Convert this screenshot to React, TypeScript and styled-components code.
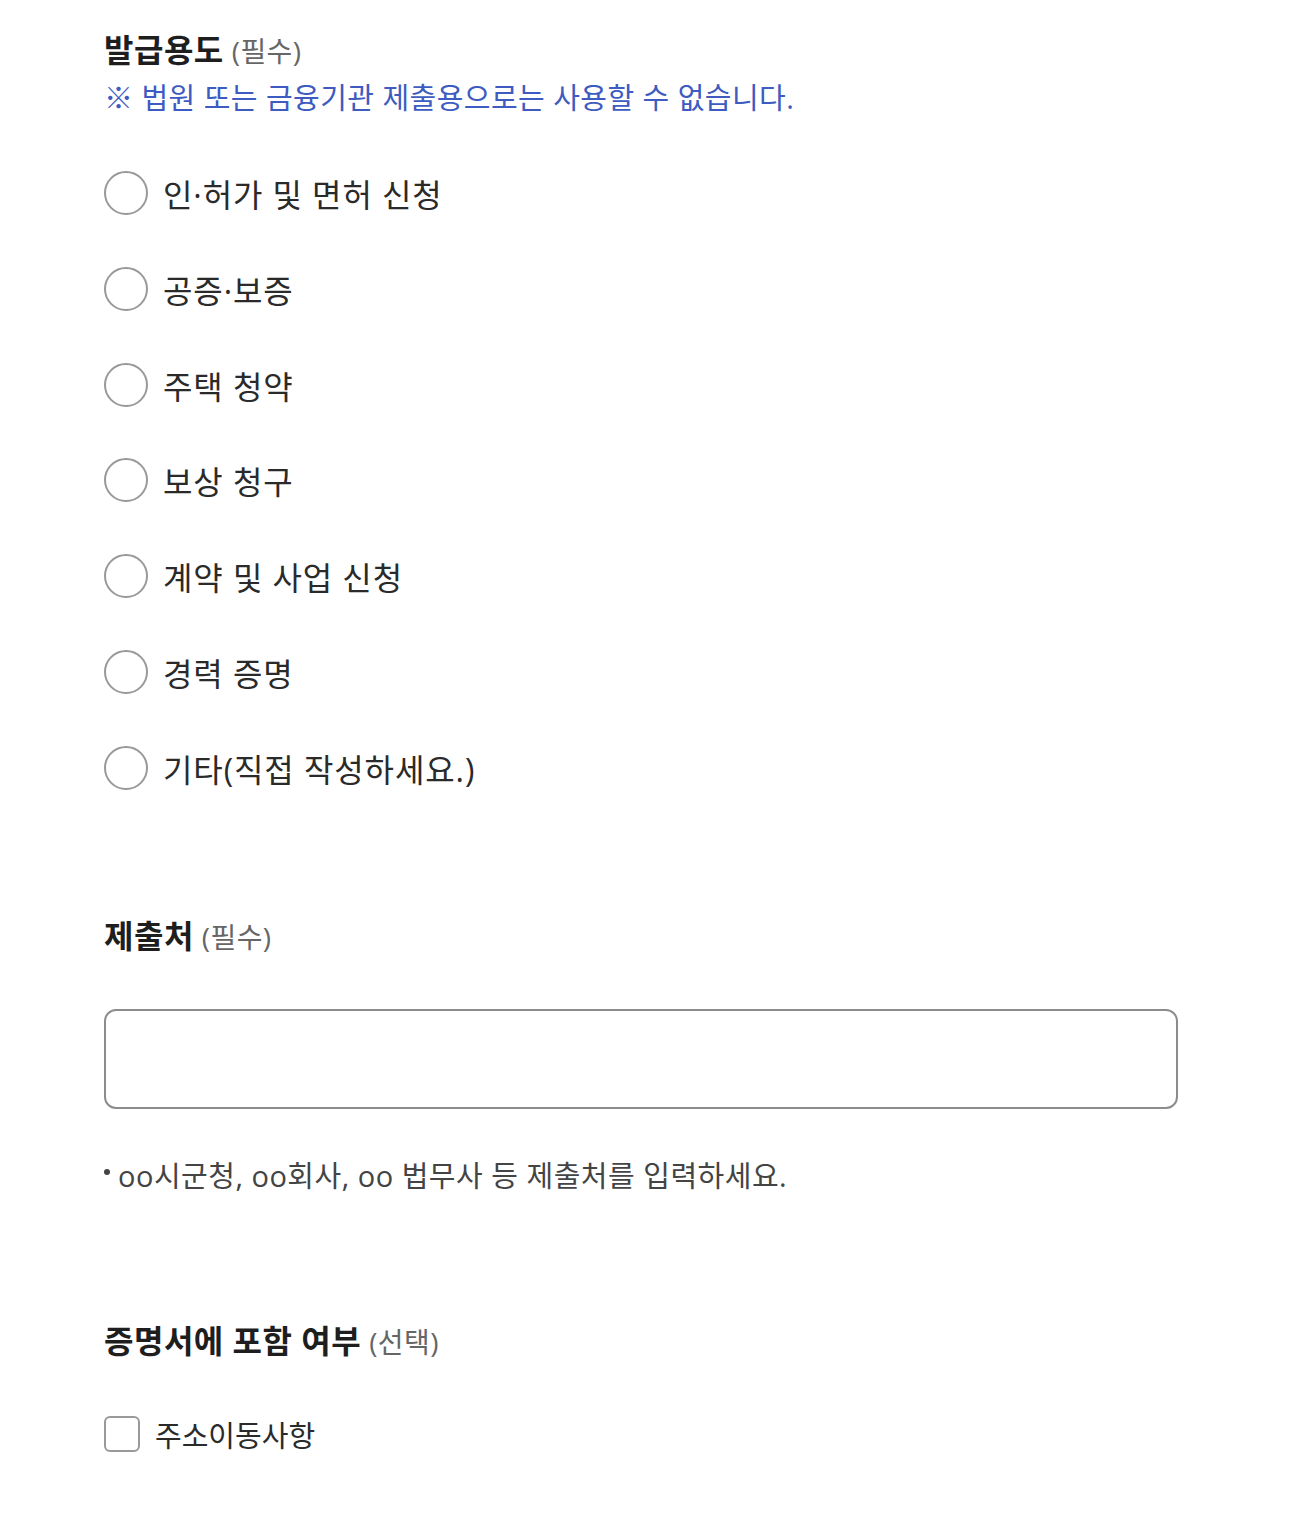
import React from "react";
import styled, { createGlobalStyle } from "styled-components";

const Global = createGlobalStyle`
  html, body { margin: 0; padding: 0; background: #fff; }
  body { font-family: "Open Sans", "Noto Sans CJK KR", sans-serif; color: #222; }
`;

const Page = styled.div`
  padding: 27px 112px 60px 104px;
  display: flex;
  flex-direction: column;
`;

const Section = styled.section<{ $gapTop?: number }>`
  display: flex;
  flex-direction: column;
  margin-top: ${(p) => p.$gapTop ?? 0}px;
`;

const Heading = styled.h2`
  margin: 0;
  font-size: 32px;
  font-weight: 700;
  color: #1e1e1e;
  line-height: 46px;
  letter-spacing: 0.5px;
`;

const Sub = styled.span`
  font-size: 28px;
  font-weight: 400;
  color: #666;
  margin-left: 8px;
  letter-spacing: 0.4px;
`;

const Notice = styled.p`
  margin: 4px 0 0;
  font-size: 29px;
  line-height: 40px;
  color: #3d5bc0;
  letter-spacing: 0.45px;
`;

const RadioList = styled.div`
  display: flex;
  flex-direction: column;
  gap: 51.8px;
  margin-top: 53px;
`;

const Option = styled.label`
  display: flex;
  align-items: center;
  gap: 15px;
  height: 44px;
  cursor: pointer;
`;

const Circle = styled.span`
  width: 44px;
  height: 44px;
  box-sizing: border-box;
  border-radius: 50%;
  border: 2px solid #999;
  flex-shrink: 0;
`;

const OptionText = styled.span`
  font-size: 32px;
  color: #2a2a2a;
  letter-spacing: 0.9px;
`;

const Field = styled.div`
  margin-top: 49px;
  height: 100px;
  box-sizing: border-box;
  border: 2px solid #8c8c8c;
  border-radius: 12px;
`;

const Hint = styled.p`
  margin: 47px 0 0;
  font-size: 29px;
  line-height: 40px;
  color: #444;
  letter-spacing: 0.5px;
  display: flex;
  align-items: center;
`;

const Dot = styled.span`
  width: 6px;
  height: 6px;
  border-radius: 50%;
  background: #444;
  margin-right: 8px;
  transform: translateY(-4px);
`;

const CheckRow = styled.label`
  display: flex;
  align-items: center;
  gap: 15px;
  margin-top: 48px;
  cursor: pointer;
`;

const Box = styled.span`
  width: 36px;
  height: 36px;
  box-sizing: border-box;
  border: 2px solid #999;
  border-radius: 6px;
  flex-shrink: 0;
`;

const CheckText = styled.span`
  font-size: 29px;
  color: #2a2a2a;
  letter-spacing: 0;
`;

const options = [
  "인·허가 및 면허 신청",
  "공증·보증",
  "주택 청약",
  "보상 청구",
  "계약 및 사업 신청",
  "경력 증명",
  "기타(직접 작성하세요.)",
];

export default function App() {
  return (
    <>
      <Global />
      <Page>
        <Section>
          <Heading>
            발급용도<Sub>(필수)</Sub>
          </Heading>
          <Notice>※ 법원 또는 금융기관 제출용으로는 사용할 수 없습니다.</Notice>
          <RadioList>
            {options.map((o) => (
              <Option key={o}>
                <Circle />
                <OptionText>{o}</OptionText>
              </Option>
            ))}
          </RadioList>
        </Section>

        <Section $gapTop={123}>
          <Heading>
            제출처<Sub>(필수)</Sub>
          </Heading>
          <Field />
          <Hint>
            <Dot />
            oo시군청, oo회사, oo 법무사 등 제출처를 입력하세요.
          </Hint>
        </Section>

        <Section $gapTop={122}>
          <Heading>
            증명서에 포함 여부<Sub>(선택)</Sub>
          </Heading>
          <CheckRow>
            <Box />
            <CheckText>주소이동사항</CheckText>
          </CheckRow>
        </Section>
      </Page>
    </>
  );
}
